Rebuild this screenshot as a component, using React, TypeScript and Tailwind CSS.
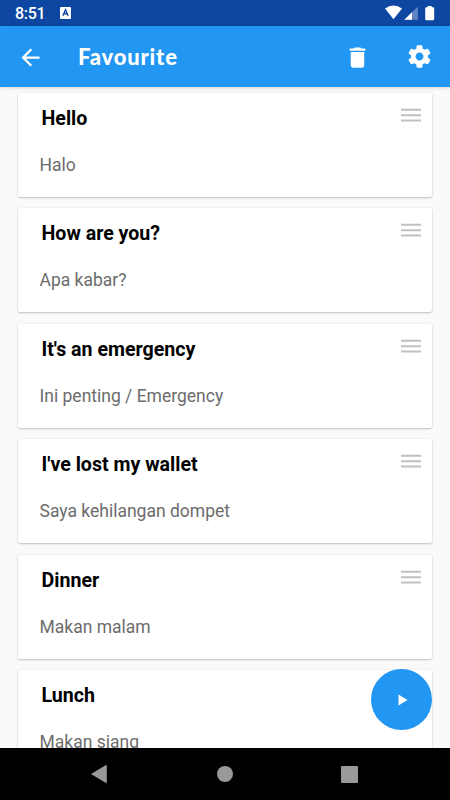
const phrases = [
  { title: "Hello", translation: "Halo" },
  { title: "How are you?", translation: "Apa kabar?" },
  { title: "It's an emergency", translation: "Ini penting / Emergency" },
  { title: "I've lost my wallet", translation: "Saya kehilangan dompet" },
  { title: "Dinner", translation: "Makan malam" },
  { title: "Lunch", translation: "Makan siang" },
];

function StatusBar() {
  return (
    <div className="flex h-[26px] shrink-0 items-center bg-[#0d47a1] pl-[15px] pr-[15px] text-white">
      <span className="mt-[2px] text-[16px] font-medium leading-none tracking-[-0.3px]">8:51</span>
      <svg className="ml-[15px] h-[12px] w-[11px]" viewBox="0 0 11 12">
        <rect width="11" height="12" rx="1" fill="#fff" />
        <path d="M2.9 8.7 5.5 2.8 8.1 8.7M3.8 6.8h3.4" fill="none" stroke="#0d47a1" strokeWidth="1.4" />
      </svg>
      <svg className="ml-auto h-[16px] w-[50px]" viewBox="0 0 50 16">
        <path d="M0 3.6Q8.5-2.6 17 3.6L8.5 14.2Z" fill="#fff" />
        <path d="M19.3 14.7 32.8 1.8v12.9Z" fill="#fff" opacity=".35" />
        <path d="M19.3 14.7 27 7.3v7.4Z" fill="#fff" />
        <path d="M42.7.9h4v1.4H48q1.2 0 1.2 1.2V14q0 1.2-1.2 1.2h-6.6q-1.2 0-1.2-1.2V3.5q0-1.2 1.2-1.2h1.3Z" fill="#fff" />
      </svg>
    </div>
  );
}

function AppBar() {
  return (
    <header className="z-10 flex h-[61px] shrink-0 items-center bg-[#2196f3] text-white shadow-[0_1px_4px_rgba(0,0,0,0.14)]">
      <svg className="ml-[17px] mt-px size-[27px]" viewBox="0 0 24 24" fill="currentColor">
        <path d="M20 11H7.83l5.59-5.59L12 4l-8 8 8 8 1.41-1.41L7.83 13H20v-2z" />
      </svg>
      <h1 className="ml-[34px] whitespace-nowrap font-['Lato',sans-serif] text-[22px] font-black leading-none tracking-[0.8px]">
        Favourite
      </h1>
      <svg className="ml-auto mt-px size-[27px]" viewBox="0 0 24 24" fill="currentColor">
        <path d="M6 19c0 1.1.9 2 2 2h8c1.1 0 2-.9 2-2V7H6v12zM19 4h-3.5l-1-1h-5l-1 1H5v2h14V4z" />
      </svg>
      <svg className="ml-[34.5px] mr-[17.5px] size-[27px]" viewBox="0 0 24 24" fill="currentColor">
        <path d="M19.43 12.98c.04-.32.07-.64.07-.98s-.03-.66-.07-.98l2.11-1.65c.19-.15.24-.42.12-.64l-2-3.46c-.12-.22-.39-.3-.61-.22l-2.49 1c-.52-.4-1.08-.73-1.69-.98l-.38-2.65A.49.49 0 0 0 14 2h-4c-.25 0-.46.18-.49.42l-.38 2.65c-.61.25-1.17.59-1.69.98l-2.49-1c-.23-.09-.49 0-.61.22l-2 3.46c-.13.22-.07.49.12.64l2.11 1.65c-.04.32-.07.65-.07.98s.03.66.07.98l-2.11 1.65c-.19.15-.24.42-.12.64l2 3.46c.12.22.39.3.61.22l2.49-1c.52.4 1.08.73 1.69.98l.38 2.65c.03.24.24.42.49.42h4c.25 0 .46-.18.49-.42l.38-2.65c.61-.25 1.17-.59 1.69-.98l2.49 1c.23.09.49 0 .61-.22l2-3.46c.12-.22.07-.49-.12-.64l-2.11-1.65zM12 15.5c-1.93 0-3.5-1.57-3.5-3.5s1.57-3.5 3.5-3.5 3.5 1.57 3.5 3.5-1.57 3.5-3.5 3.5z" />
      </svg>
    </header>
  );
}

function PhraseCard({ title, translation }: { title: string; translation: string }) {
  return (
    <article className="flex h-[104px] shrink-0 items-start justify-between rounded-[2px] bg-white pl-[22px] pr-[11.5px] shadow-[0_1px_2px_rgba(0,0,0,0.22),0_0_2px_rgba(0,0,0,0.08)]">
      <div className="whitespace-nowrap">
        <h2 className="ml-[2px] mt-[14px] text-[19.6px] font-bold leading-6 text-black">{title}</h2>
        <p className="mt-[22px] text-[17.5px] leading-6 text-[#6c6c6c]">{translation}</p>
      </div>
      <svg className="mt-[15px] h-[14px] w-[20px]" viewBox="0 0 20 14" fill="#c3bfc0">
        <path d="M0 .8h20v2H0zM0 6.2h20v2H0zM0 11.6h20v2H0z" />
      </svg>
    </article>
  );
}

function NavigationBar() {
  return (
    <nav className="flex h-[52px] shrink-0 items-center justify-between bg-black pl-[91px] pr-[92px] text-[#999]">
      <svg className="h-[18px] w-[16px]" viewBox="0 0 16 18" fill="currentColor">
        <path d="M0 9 14.6.2q1.2-.6 1.2.8v16q0 1.4-1.2.8Z" />
      </svg>
      <span className="ml-[1px] size-[16px] rounded-full bg-[#999]" />
      <span className="size-[17px] rounded-[1px] bg-[#999]" />
    </nav>
  );
}

export default function App() {
  return (
    <div className="relative flex h-[800px] w-[450px] flex-col overflow-hidden bg-[#fafafa] font-['Roboto',sans-serif]">
      <StatusBar />
      <AppBar />
      <main className="flex min-h-0 flex-1 flex-col gap-[11.4px] overflow-hidden pl-[17.5px] pr-[18px] pt-[6px]">
        {phrases.map((phrase) => (
          <PhraseCard key={phrase.title} {...phrase} />
        ))}
      </main>
      <NavigationBar />
      <button aria-label="Play" className="absolute bottom-[70px] right-[18px] flex size-[61px] items-center justify-center rounded-full bg-[#2196f3]">
        <svg className="ml-[2px] h-[12px] w-[10px]" viewBox="0 0 10 12" fill="#fff">
          <path d="M.5.4 9.5 6 .5 11.6Z" />
        </svg>
      </button>
    </div>
  );
}
